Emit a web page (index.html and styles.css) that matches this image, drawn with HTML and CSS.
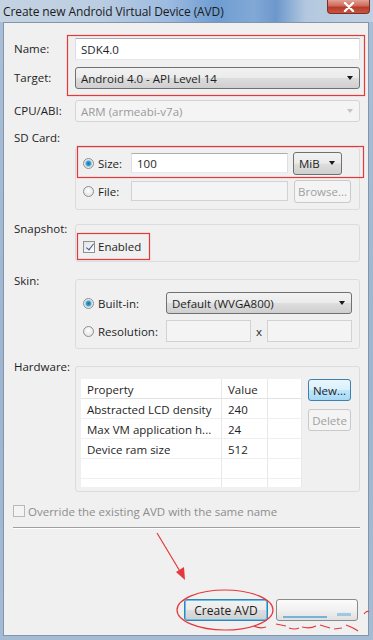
FILE: index.html
```html
<!DOCTYPE html>
<html lang="en">
<head>
    <meta charset="UTF-8">
    <title>Create new Android Virtual Device (AVD)</title>
    <link rel="stylesheet" href="styles.css">
</head>
<body>
<div class="window">
    <div class="titlebar">
        <span class="title">Create new Android Virtual Device (AVD)</span>
        <span class="close-btn">
            <svg width="12" height="10" viewBox="0 0 12 10"><path d="M2 1 L10 9 M10 1 L2 9" stroke="#fff" stroke-width="2.4" stroke-linecap="round"/></svg>
        </span>
    </div>

    <div class="client">
        <div class="row r-name">
            <span class="lbl">Name:</span>
            <div class="field text">SDK4.0</div>
        </div>
        <div class="row r-target">
            <span class="lbl">Target:</span>
            <div class="field combo">Android 4.0 - API Level 14<span class="arrow"></span></div>
        </div>
        <div class="row r-cpu">
            <span class="lbl">CPU/ABI:</span>
            <div class="field combo disabled">ARM (armeabi-v7a)<span class="arrow"></span></div>
        </div>

        <div class="lbl sd-label">SD Card:</div>
        <div class="group sd-group">
            <div class="opt-row">
                <span class="opt"><span class="radio on"></span>Size:</span>
                <div class="text sd-input">100</div>
                <div class="combo mib">MiB<span class="arrow"></span></div>
            </div>
            <div class="opt-row file-row">
                <span class="opt"><span class="radio"></span>File:</span>
                <div class="text sd-input blank"></div>
                <div class="btn disabled browse">Browse...</div>
            </div>
        </div>

        <div class="row sect r-snap">
            <span class="lbl">Snapshot:</span>
            <div class="group snap-group">
                <span class="check on"></span>Enabled
            </div>
        </div>

        <div class="row sect r-skin">
            <span class="lbl">Skin:</span>
            <div class="group skin-group">
                <div class="opt-row">
                    <span class="opt wide"><span class="radio on"></span>Built-in:</span>
                    <div class="combo skin-combo">Default (WVGA800)<span class="arrow"></span></div>
                </div>
                <div class="opt-row res-row">
                    <span class="opt wide"><span class="radio"></span>Resolution:</span>
                    <div class="text res blank"></div>
                    <span class="times">x</span>
                    <div class="text res blank"></div>
                </div>
            </div>
        </div>

        <div class="row sect r-hw">
            <span class="lbl">Hardware:</span>
            <div class="group hw-group">
                <div class="hw-table">
                    <div class="cell head">Property</div><div class="cell head">Value</div><div class="cell head"></div>
                    <div class="cell">Abstracted LCD density</div><div class="cell">240</div><div class="cell"></div>
                    <div class="cell">Max VM application h...</div><div class="cell">24</div><div class="cell"></div>
                    <div class="cell">Device ram size</div><div class="cell">512</div><div class="cell"></div>
                    <div class="cell"></div><div class="cell"></div><div class="cell"></div>
                    <div class="cell"></div><div class="cell"></div><div class="cell"></div>
                </div>
                <div class="hw-buttons">
                    <div class="btn default">New...</div>
                    <div class="btn disabled">Delete</div>
                </div>
            </div>
        </div>

        <div class="override">
            <span class="check off"></span>Override the existing AVD with the same name
        </div>
        <div class="separator"></div>

        <div class="actions">
            <div class="btn focused create">Create AVD</div>
            <div class="btn cancel"><span class="smudge"></span><span class="smudge two"></span></div>
        </div>
    </div>

    <!-- red markup drawn over the dialog -->
    <svg class="marks" width="373" height="640" viewBox="0 0 373 640">
        <g fill="none" stroke="#e5383b" stroke-width="1.2">
            <rect x="67.5" y="35.5" width="297" height="60"/>
            <rect x="77.5" y="146.5" width="286" height="31"/>
            <rect x="77.5" y="233.5" width="72" height="26"/>
            <ellipse cx="225" cy="610" rx="48" ry="20"/>
            <path d="M157 533 L181 573"/>
            <path d="M254 626 q6 3 12 1 M276 624 l10 2 M289 628 q6 2 10 0 M302 627 q8 2 14 -1 M320 625 l10 3 M334 629 l8 -1 M346 625 q8 3 12 6 M364 614 q3 -4 5 -2"/>
        </g>
        <path d="M176 572 L185 580 L184 567 Z" fill="#e5383b"/>
    </svg>
</div>
</body>
</html>
```

FILE: styles.css
```css
body {
    margin: 0;
    font-family: "Open Sans", "Liberation Sans", sans-serif;
    font-size: 11.5px;
    color: #1e1e1e;
}

.window {
    position: relative;
    width: 373px;
    height: 640px;
    display: flex;
    flex-direction: column;
    overflow: hidden;
    background: linear-gradient(180deg, #a9bfd8, #9eb5cf 60%, #a5bbd4);
}

/* Title bar */
.titlebar {
    height: 22px;
    flex: none;
    display: flex;
    align-items: center;
    padding-left: 3px;
    background: linear-gradient(90deg, #c5d3e2 0%, #bccee2 25%, #9dbbe0 45%, #6e9dd2 58%, #82a9d6 68%, #6d98cc 74%, #b3c8df 82%, #c0d0e2 100%);
}

.title {
    font-size: 12px;
    color: #1b1b1b;
    letter-spacing: -0.1px;
}

.close-btn {
    align-self: flex-start;
    margin-left: auto;
    margin-right: 3px;
    width: 43px;
    height: 14px;
    display: flex;
    align-items: center;
    justify-content: center;
    border: 1px solid #7a2f2a;
    border-top: none;
    border-radius: 0 0 4px 4px;
    box-sizing: border-box;
    background: linear-gradient(180deg, #e1a195 0%, #cf6a5a 45%, #b73b2a 55%, #c9553f 100%);
}

/* Client area */
.client {
    flex: 1;
    margin: 0 4px 4px 3px;
    border: 1px solid #8295ab;
    background: #f0f0f0;
    padding: 15px 8px 0 10px;
    display: flex;
    flex-direction: column;
}

.row {
    display: flex;
    align-items: center;
}

.lbl {
    width: 61px;
    flex: none;
    line-height: 14px;
}

.field {
    flex: 1;
}

.text,
.combo {
    height: 22px;
    box-sizing: border-box;
    display: flex;
    align-items: center;
    padding-left: 5px;
}

.text {
    background: #fff;
    border: 1px solid #dbdfe6;
    border-top-color: #abadb3;
    border-bottom-color: #e3e9ef;
}

.text.blank {
    background: #f4f4f4;
    border-color: #d2d2d2;
}

.combo {
    position: relative;
    border: 1px solid #707070;
    border-radius: 3px;
    background: linear-gradient(180deg, #f2f2f2 0%, #ebebeb 48%, #dddddd 52%, #cfcfcf 100%);
}

.combo .arrow {
    position: absolute;
    right: 6px;
    top: 8px;
    border-left: 3.5px solid transparent;
    border-right: 3.5px solid transparent;
    border-top: 4px solid #1a1a1a;
}

.combo.disabled {
    background: #f4f4f4;
    border-color: #d5d5d5;
    color: #9a9a9a;
}

.combo.disabled .arrow {
    border-top-color: #c4c4c4;
}

.r-target { margin-top: 7px; }
.r-cpu { margin-top: 11px; }

.sd-label {
    margin-top: 9px;
}

/* Group boxes */
.group {
    border: 1px solid #dcdcdc;
    border-radius: 3px;
    box-sizing: border-box;
}

.sd-group {
    margin: 2px 0 0 61px;
    padding: 4px 8px 7px 7px;
}

.opt-row {
    display: flex;
    align-items: center;
    height: 22px;
}

.file-row { margin-top: 6px; }

.opt {
    width: 48px;
    flex: none;
    display: flex;
    align-items: center;
}

.opt.wide { width: 83px; }

.radio {
    width: 11px;
    height: 11px;
    border-radius: 50%;
    box-sizing: border-box;
    border: 1px solid #8e8f8f;
    background: radial-gradient(circle at 50% 40%, #ffffff, #dcdcdc);
    margin-right: 4px;
    flex: none;
}

.radio.on {
    background: radial-gradient(circle, #1f6e9e 0, #3d9fd1 2.2px, #a8d6ee 3.2px, #e9e9e9 4px);
}

.sd-input {
    width: 157px;
    height: 20px;
    flex: none;
}

.mib {
    width: 49px;
    margin-left: 5px;
    flex: none;
    height: 23px;
}

.btn {
    height: 22px;
    box-sizing: border-box;
    display: flex;
    align-items: center;
    justify-content: center;
    border: 1px solid #707070;
    border-radius: 3px;
    background: linear-gradient(180deg, #f2f2f2 0%, #ebebeb 48%, #dddddd 52%, #cfcfcf 100%);
}

.btn.disabled {
    border-color: #c9c9c9;
    background: #f4f4f4;
    color: #a0a0a0;
}

.browse {
    width: 57px;
    margin-left: 6px;
    flex: none;
    height: 23px;
}

.sect {
    align-items: flex-start;
}

.r-snap { margin-top: 14px; }
.r-snap .lbl { margin-top: -2px; }

.snap-group {
    flex: 1;
    height: 38px;
    display: flex;
    align-items: center;
    padding-left: 7px;
    padding-top: 7px;
}

.check {
    width: 12px;
    height: 12px;
    box-sizing: border-box;
    border: 1px solid #8f8f8f;
    background: linear-gradient(135deg, #e2e2e2, #fdfdfd);
    margin-right: 3px;
    position: relative;
    flex: none;
}

.check.on::after {
    content: "";
    position: absolute;
    left: 3.5px;
    top: 0.5px;
    width: 3px;
    height: 7px;
    border: solid #3f5a96;
    border-width: 0 1.5px 1.5px 0;
    transform: rotate(38deg);
}

.r-skin { margin-top: 17px; }
.r-skin .lbl { margin-top: -5px; }

.skin-group {
    flex: 1;
    height: 70px;
    padding: 12px 7px 0 7px;
}

.skin-combo {
    width: 186px;
    flex: none;
}

.res-row { margin-top: 6px; }

.res {
    width: 85px;
    flex: none;
}

.times {
    width: 16px;
    text-align: center;
}

.r-hw { margin-top: 17px; }
.r-hw .lbl { margin-top: -6px; }

.hw-group {
    flex: 1;
    height: 126px;
    padding: 12px 0 0 5px;
    display: flex;
    align-items: flex-start;
}

.hw-table {
    width: 221px;
    height: 108px;
    overflow: hidden;
    background: #fff;
    display: grid;
    grid-template-columns: 141px 46px 34px;
    grid-auto-rows: 20px;
}

.cell {
    border-right: 1px solid #e8e8e8;
    border-bottom: 1px solid #efefef;
    padding-left: 6px;
    line-height: 21px;
    white-space: nowrap;
    overflow: hidden;
}

.cell.head {
    border-bottom-color: #e2e2e2;
}

.hw-buttons {
    margin-left: 6px;
    display: flex;
    flex-direction: column;
    gap: 8px;
    width: 43px;
}

.btn.default {
    border-color: #3c7fb1;
    background: linear-gradient(180deg, #eaf6fd 0%, #d9f0fc 48%, #bee6fd 52%, #a7d9f5 100%);
}

/* Override line */
.override {
    margin-top: 12px;
    margin-left: -1px;
    display: flex;
    align-items: center;
    color: #8d8d8d;
    height: 14px;
}

.check.off {
    background: #f4f4f4;
    border-color: #b9b9b9;
    margin-right: 3px;
}

.separator {
    margin-top: 9px;
    margin-left: -1px;
    border-top: 1px solid #a0a0a0;
    border-bottom: 1px solid #fff;
}

.actions {
    margin-top: 70px;
    display: flex;
    justify-content: flex-end;
    gap: 8px;
    margin-right: 2px;
}

.create {
    width: 84px;
    font-size: 12px;
}

.btn.focused {
    border-color: #3c7fb1;
    box-shadow: inset 0 0 0 1px #5fc3f0;
}

.cancel {
    width: 82px;
    position: relative;
    border-color: #8a8a8a;
    background: linear-gradient(180deg, #fbfbfb 0%, #f1f1f1 50%, #e0e0e0 100%);
}

.smudge {
    position: absolute;
    left: 6px;
    right: 30px;
    bottom: 2px;
    height: 2px;
    background: #5aa6d6;
    opacity: 0.8;
}

.smudge.two {
    left: 60px;
    right: 6px;
    bottom: 4px;
    height: 3px;
    opacity: 0.5;
}

.marks {
    position: absolute;
    left: 0;
    top: 0;
    pointer-events: none;
}
```
